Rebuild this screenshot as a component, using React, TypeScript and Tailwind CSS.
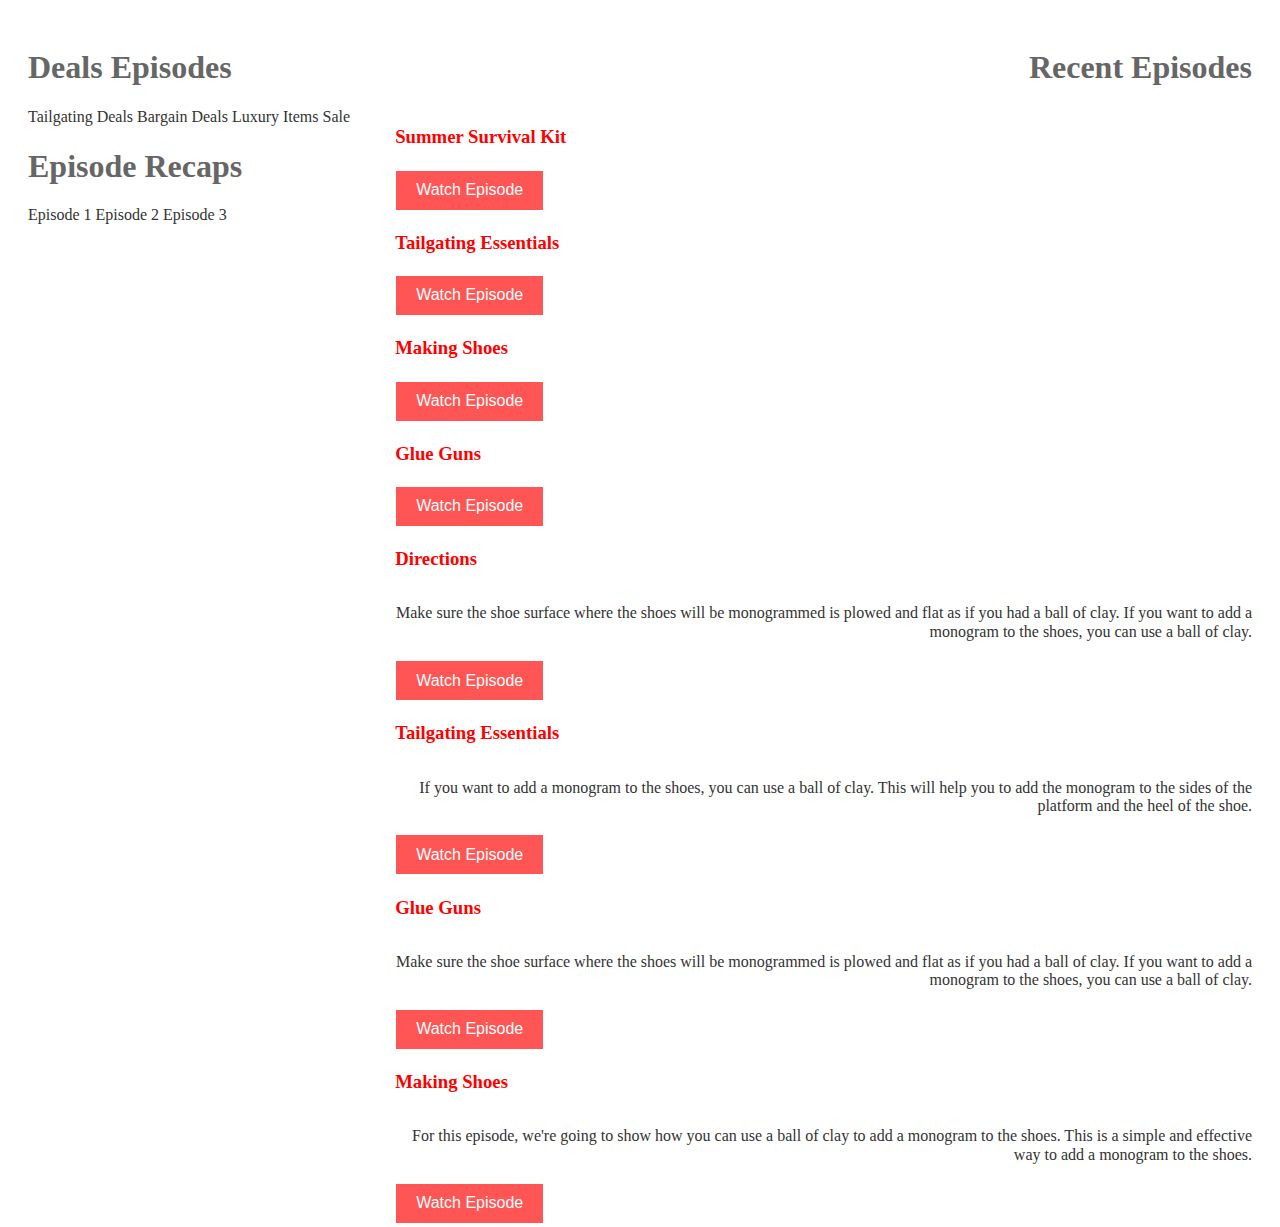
import React from 'react';

// Episodes shown in the right column; some carry a short description
const episodes: { title: string; text?: string }[] = [
  { title: 'Summer Survival Kit' },
  { title: 'Tailgating Essentials' },
  { title: 'Making Shoes' },
  { title: 'Glue Guns' },
  {
    title: 'Directions',
    text: 'Make sure the shoe surface where the shoes will be monogrammed is plowed and flat as if you had a ball of clay. If you want to add a monogram to the shoes, you can use a ball of clay.',
  },
  {
    title: 'Tailgating Essentials',
    text: 'If you want to add a monogram to the shoes, you can use a ball of clay. This will help you to add the monogram to the sides of the platform and the heel of the shoe.',
  },
  {
    title: 'Glue Guns',
    text: 'Make sure the shoe surface where the shoes will be monogrammed is plowed and flat as if you had a ball of clay. If you want to add a monogram to the shoes, you can use a ball of clay.',
  },
  {
    title: 'Making Shoes',
    text: "For this episode, we're going to show how you can use a ball of clay to add a monogram to the shoes. This is a simple and effective way to add a monogram to the shoes.",
  },
];

const dealLinks = ['Tailgating Deals', 'Bargain Deals', 'Luxury Items Sale'];
const recapLinks = ['Episode 1', 'Episode 2', 'Episode 3'];

function SectionTitle({ children, className = '' }: { children: React.ReactNode; className?: string }) {
  return (
    <h1 className={`text-[32px] leading-[1.15] font-bold text-[#666666] my-[21.44px] ${className}`}>
      {children}
    </h1>
  );
}

function EpisodeItem({ title, text }: { title: string; text?: string }) {
  return (
    <div className="flex flex-col items-start">
      <h3 className="text-[18.72px] leading-[1.15] font-bold text-[#ff0000] my-[18.72px]">{title}</h3>
      {text && <p className="self-stretch text-right text-[#333333] leading-[1.15] my-4">{text}</p>}
      <button
        type="button"
        className="ml-px mt-[4px] mb-[3.5px] h-[39px] px-5 bg-[#ff5555] text-white text-base leading-[1.15] font-['Liberation_Sans',Arial,sans-serif]"
      >
        Watch Episode
      </button>
    </div>
  );
}

export default function App() {
  return (
    <div className="min-h-[1227px] bg-white px-[28px] pt-[28px] pb-[8px] font-['Liberation_Serif','Times_New_Roman',serif] text-base text-[#333333]">
      <div className="flex">
        <aside className="w-[30%] shrink-0">
          <SectionTitle>Deals Episodes</SectionTitle>
          <p className="my-4 leading-[1.15]">
            {dealLinks.map((l, i) => (
              <span key={l}>
                {i > 0 && ' '}
                <a>{l}</a>
              </span>
            ))}
          </p>
          <SectionTitle>Episode Recaps</SectionTitle>
          <p className="my-4 leading-[1.15]">
            {recapLinks.map((l, i) => (
              <span key={l}>
                {i > 0 && ' '}
                <a>{l}</a>
              </span>
            ))}
          </p>
        </aside>
        <main className="flex-1 flex flex-col">
          <SectionTitle className="text-right">Recent Episodes</SectionTitle>
          {episodes.map((ep, i) => (
            <EpisodeItem key={i} title={ep.title} text={ep.text} />
          ))}
        </main>
      </div>
    </div>
  );
}
